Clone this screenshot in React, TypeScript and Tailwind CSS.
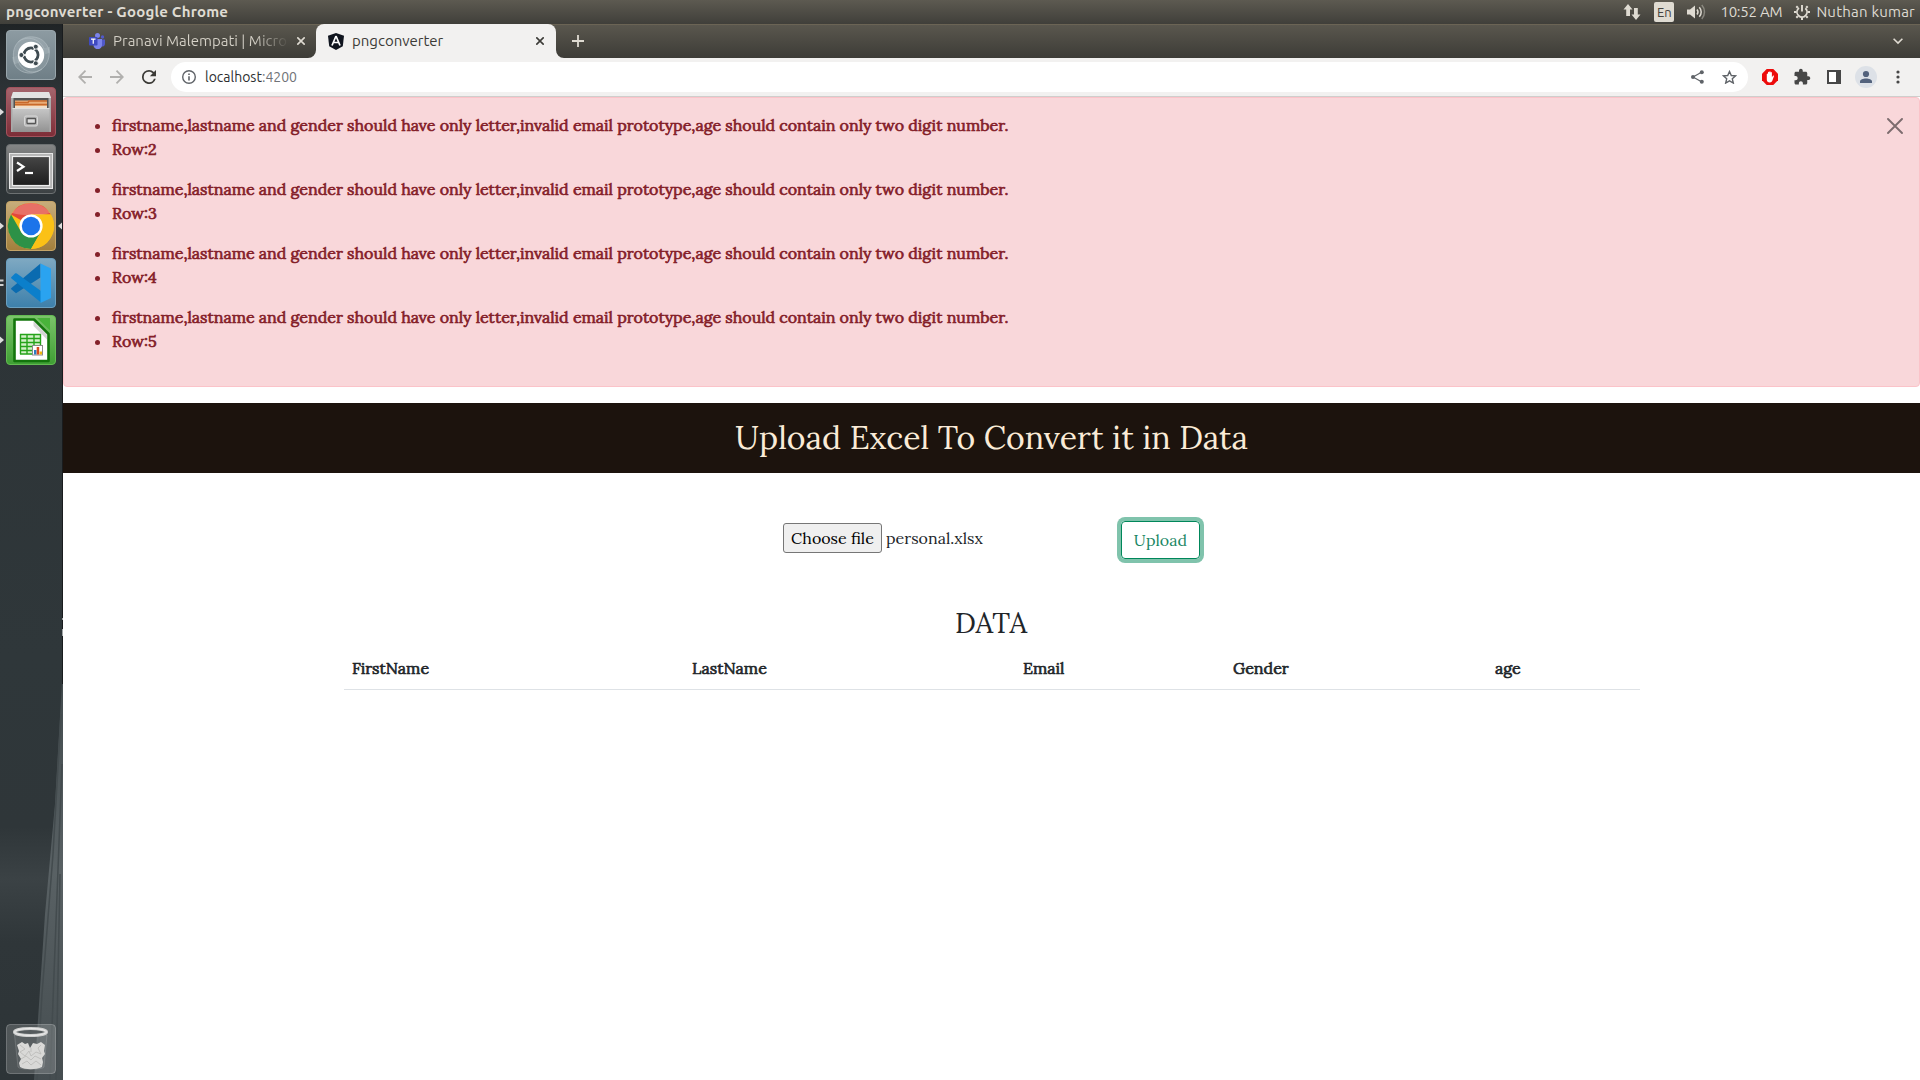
import React from "react";

const MESSAGE =
  "firstname,lastname and gender should have only letter,invalid email prototype,age should contain only two digit number.";
const ROWS = [2, 3, 4, 5];

/* ---------- launcher icons ---------- */

function Tile({ from, to, stroke }: { from: string; to: string; stroke: string }) {
  const id = "t" + from.slice(1) + to.slice(1);
  return (
    <>
      <defs>
        <linearGradient id={id} x1="0" y1="0" x2="0" y2="1">
          <stop offset="0" stopColor={from} />
          <stop offset="1" stopColor={to} />
        </linearGradient>
      </defs>
      <rect x="0.5" y="0.5" width="49" height="49" rx="3.5" fill={`url(#${id})`} stroke={stroke} />
    </>
  );
}

function DashIcon() {
  return (
    <svg width="50" height="50" viewBox="0 0 50 50">
      <Tile from="#8d9ba2" to="#6f7f87" stroke="#98a5ab" />
      <g fill="none" stroke="#b4c0c5" strokeOpacity="0.6">
        <path d="M9 34C3 17 14 5 28 7c9 1 15 8 15 16" fill="#b4c0c5" fillOpacity="0.35" />
        <path d="M43 17c2 15-5 24-17 26C15 44 7 37 7 27" fill="#b4c0c5" fillOpacity="0.25" />
        <path d="M12 12C22 4 35 10 38 19M36 39C26 46 14 40 12 30" />
      </g>
      <circle cx="25" cy="25" r="13.2" fill="#fff" />
      <circle cx="25" cy="25" r="7" fill="none" stroke="#3f4b51" strokeWidth="2.9" />
      <g stroke="#fff" strokeWidth="1.3">
        <path d="M25 25H12M25 25l6.5-11.3M25 25l6.5 11.3" />
      </g>
      <circle cx="25" cy="25" r="5.4" fill="#fff" />
      <g fill="#3f4b51" stroke="#fff" strokeWidth="0.9">
        <circle cx="15.4" cy="25" r="2.5" />
        <circle cx="29.8" cy="16.7" r="2.5" />
        <circle cx="29.8" cy="33.3" r="2.5" />
      </g>
    </svg>
  );
}

function FilesIcon() {
  return (
    <svg width="50" height="50" viewBox="0 0 50 50">
      <Tile from="#a5656d" to="#7d2d37" stroke="#a3525c" />
      <defs>
        <linearGradient id="cab" x1="0" y1="0" x2="0" y2="1">
          <stop offset="0" stopColor="#c6c6c6" />
          <stop offset="1" stopColor="#929292" />
        </linearGradient>
      </defs>
      <path d="M7 5h36l2 6v34H5V11z" fill="#aaa" />
      <path d="M7 5h36l2 6H5z" fill="#e3e3e3" />
      <path d="M7.500 11h35v11h-35z" fill="#535353" />
      <path d="M9 13.500h32v8H9z" fill="#e8ad78" />
      <path d="M9 15.500h13l1-1.500h18M9 17.500h32" stroke="#c9692b" strokeWidth="1.500" fill="none" />
      <path d="M9 19h32v2H9z" fill="#f0ddc8" />
      <path d="M6.500 21.500h37V45h-37z" fill="url(#cab)" />
      <path d="M6.500 21.500h37" stroke="#e0e0e0" />
      <rect x="18.500" y="29" width="13" height="10" rx="1.500" fill="#b9b9b9" stroke="#d8d8d8" />
      <rect x="21" y="31.500" width="8.500" height="5" rx="0.500" fill="#ddd" stroke="#555" strokeWidth="1.300" />
    </svg>
  );
}

function TerminalIcon() {
  return (
    <svg width="50" height="50" viewBox="0 0 50 50">
      <Tile from="#858686" to="#3b4042" stroke="#6d7172" />
      <defs>
        <linearGradient id="scr" x1="0" y1="0" x2="0" y2="1">
          <stop offset="0" stopColor="#464646" />
          <stop offset="1" stopColor="#1d1d1d" />
        </linearGradient>
      </defs>
      <rect x="3.500" y="9.500" width="43" height="35" fill="#b5b5b5" stroke="#e6e6e6" />
      <rect x="6.500" y="12.500" width="37" height="29" fill="url(#scr)" stroke="#ededed" strokeWidth="1.200" />
      <path d="M11 18.500l6.500 4.200L11 27" fill="none" stroke="#fff" strokeWidth="2.200" />
      <path d="M19 29h8" stroke="#fff" strokeWidth="2.200" />
    </svg>
  );
}

function ChromeIcon() {
  return (
    <svg width="50" height="50" viewBox="0 0 50 50">
      <Tile from="#c8ad7b" to="#a27f3c" stroke="#c4a468" />
      <circle cx="25" cy="25" r="23" fill="#fbc116" />
      <path d="M25 25 5.080 13.500A23 23 0 0 1 44.920 13.500L25 13.500Z" fill="#e2483b" />
      <path d="M5.080 13.500A23 23 0 0 0 25 48L34.960 30.750 15.040 30.750Z" fill="#2d9147" />
      <path d="M25 13.500H44.920A23 23 0 0 1 25 48L34.960 30.750Z" fill="#fbc116" />
      <path d="M6 12a23 23 0 0 1 38 0c-9 3-28 3-38 0z" fill="#fff" fillOpacity="0.22" />
      <circle cx="25" cy="25" r="11.600" fill="#fff" />
      <circle cx="25" cy="25" r="9.200" fill="#1c74ea" />
    </svg>
  );
}

function CodeIcon() {
  return (
    <svg width="50" height="50" viewBox="0 0 50 50">
      <Tile from="#7fa9c2" to="#3d80ab" stroke="#6ba0c0" />
      <path d="M34.500 5.500v14L10 35.200 5.500 31.500a1 1 0 0 1 0-1.600z" fill="#0a6bb0" />
      <path d="M5.500 20.500a1 1 0 0 1 0-1.600L9 15.500a1.500 1.500 0 0 1 1.800 0L35 33v11.500z" fill="#0b7fcb" />
      <path d="M34.500 5.500 45 10.500v29.500l-10.500 5z" fill="#2aa3f0" />
    </svg>
  );
}

function CalcIcon() {
  return (
    <svg width="50" height="50" viewBox="0 0 50 50">
      <Tile from="#7cc46b" to="#3f9f34" stroke="#63bb52" />
      <path d="M8.500 4.500H28L42.500 19v27h-34z" fill="#fff" stroke="#13750c" strokeWidth="2.600" strokeLinejoin="round" />
      <path d="M31 3h13v12.500z" fill="#49b33a" />
      <path d="M27.500 6 41 19.500v5L27.500 11z" fill="#d5d5d5" />
      <path d="M14 19h21v20H14z" fill="#d3f0c9" />
      <path
        d="M14 19.500h21M14 23.500h21M14 27.500h21M14 31.500h21M14 35.500h21M14 39h21M14.500 19v20M21 19v20M28 19v20M34.500 19v20"
        stroke="#25a31a"
        strokeWidth="1.400"
      />
      <rect x="26.500" y="30.500" width="10" height="9.500" fill="#fff" stroke="#8a8a8a" />
      <path d="M28 35h2.500v4.500H28z" fill="#2d7cc2" />
      <path d="M30.700 32h2.500v7.500h-2.500z" fill="#d94a1d" />
      <path d="M33.500 36.500H36v3h-2.500z" fill="#f2b90c" />
    </svg>
  );
}

function TrashIcon() {
  return (
    <svg width="50" height="50" viewBox="0 0 50 50">
      <rect x="0.500" y="0.500" width="49" height="49" rx="3.500" fill="#fff" fillOpacity="0.17" stroke="#fff" strokeOpacity="0.25" />
      <path d="M8.500 11 12 43c1 3 25 3 26 0l3-32z" fill="#fff" fillOpacity="0.05" stroke="#fff" strokeOpacity="0.15" />
      <path
        d="M11 21l5-3 3 2 3-1 2 5 3-5 4 1 4-2 4 3-1 6 1 3-3 4 1 4-1 5c-6 3-17 3-22 0l-1-4 2-4-3-5 1-3z"
        fill="#d9d9d7"
      />
      <path
        d="M14 21l5 4-5 3 5 4 4-5 2 5 5-4 5 2-3-6 3-3M15 35l5-3 5 4 4-4 6 3M16 40l5-3 4 4 5-4 5 4M25 24v4"
        fill="none"
        stroke="#bcbcba"
        strokeWidth="0.900"
      />
      <ellipse cx="24.500" cy="8" rx="16" ry="3.500" fill="#555b5d" stroke="#cfd0cf" strokeWidth="3" />
      <ellipse cx="24.500" cy="8" rx="16" ry="3.500" fill="none" stroke="#f0f0f0" strokeWidth="0.800" />
    </svg>
  );
}

function Arrow({ side }: { side: "left" | "right" }) {
  return side === "left" ? (
    <svg className="absolute top-[21px] left-0" width="4" height="8" viewBox="0 0 4 8">
      <path d="M0 0.500v7L4 4z" fill="#dcdcdc" />
    </svg>
  ) : (
    <svg className="absolute top-[21px] right-px" width="4" height="8" viewBox="0 0 4 8">
      <path d="M4 0.500v7L0 4z" fill="#dcdcdc" />
    </svg>
  );
}

function LauncherItem({ children, marks }: { children: React.ReactNode; marks?: React.ReactNode }) {
  return (
    <div className="relative flex h-[50px] w-full pl-1.5">
      {marks}
      {children}
    </div>
  );
}

function Launcher() {
  return (
    <aside className="relative flex w-[63px] shrink-0 flex-col justify-between overflow-hidden bg-[#30373a] pt-1.5 pb-1.5">
      <svg className="absolute inset-0" width="63" height="1056" viewBox="0 0 63 1056">
        <defs>
          <linearGradient id="wall" x1="0" y1="0" x2="0" y2="1">
            <stop offset="0" stopColor="#202426" />
            <stop offset="0.060" stopColor="#2c3235" />
            <stop offset="0.600" stopColor="#2f373a" />
            <stop offset="0.760" stopColor="#2f3639" />
            <stop offset="0.810" stopColor="#3b4245" />
            <stop offset="0.870" stopColor="#2f3639" />
            <stop offset="1" stopColor="#2d3437" />
          </linearGradient>
          <linearGradient id="wedge" x1="0" y1="0" x2="0" y2="1">
            <stop offset="0" stopColor="#40494c" />
            <stop offset="0.500" stopColor="#596164" />
            <stop offset="1" stopColor="#454d50" />
          </linearGradient>
        </defs>
        <rect width="63" height="1056" fill="url(#wall)" />
        <path d="M63 640 55 780 45 890 34 1056H63z" fill="url(#wedge)" />
        <path d="M61 690 53 830 42 970 37 1056M62 740 50 1056M60 850 56 1056" stroke="#434b4e" strokeWidth="1.500" fill="none" />
        <path d="M62.500 0V660" stroke="#191c1e" />
        <path d="M62.500 594v2M62.500 605v7" stroke="#a0a5a6" />
      </svg>
      <nav className="relative flex flex-col gap-[7px]">
        <LauncherItem>
          <DashIcon />
        </LauncherItem>
        <LauncherItem marks={<Arrow side="left" />}>
          <FilesIcon />
        </LauncherItem>
        <LauncherItem>
          <TerminalIcon />
        </LauncherItem>
        <LauncherItem
          marks={
            <>
              <Arrow side="left" />
              <Arrow side="right" />
            </>
          }
        >
          <ChromeIcon />
        </LauncherItem>
        <LauncherItem
          marks={
            <svg className="absolute top-[21px] left-0" width="4" height="8" viewBox="0 0 4 8">
              <path d="M0 1.500h3.500M0 6h3.500" stroke="#cfcfcf" strokeWidth="2" />
            </svg>
          }
        >
          <CodeIcon />
        </LauncherItem>
        <LauncherItem marks={<Arrow side="left" />}>
          <CalcIcon />
        </LauncherItem>
      </nav>
      <LauncherItem>
        <TrashIcon />
      </LauncherItem>
    </aside>
  );
}

/* ---------- system bar ---------- */

function SystemBar() {
  return (
    <header className="flex h-6 shrink-0 items-center bg-linear-to-b from-[#5d5a51] to-[#403f3a] pr-[5px] pl-1.5 text-[15px] text-[#dfdbd2]">
      <span className="text-[15px] leading-6 font-bold tracking-[0.22px]">pngconverter - Google Chrome</span>
      <div className="ml-auto flex items-center">
        <svg className="mr-[13px]" width="18" height="16" viewBox="0 0 18 16" fill="#dfdbd2">
          <path d="M5 0 9.500 5.500H7V12H3.200V5.500H0.500zM13 16 8.500 10.500H11V4h3.800v6.500h2.700z" />
        </svg>
        <span className="mr-[13px] flex h-5 w-5 items-center justify-center rounded-xs bg-[#dfdbd2] text-[13px] leading-none text-[#45433e]">
          En
        </span>
        <svg className="mr-[13px]" width="20" height="16" viewBox="0 0 20 16" fill="none" stroke="#dfdbd2" strokeWidth="1.500">
          <path d="M0 5.500h3L8 1.500v13L3 10.500H0z" fill="#dfdbd2" stroke="none" />
          <path d="M10 5.500a4 4 0 0 1 0 5" />
          <path d="M12.300 3.200a7 7 0 0 1 0 9.600" />
          <path d="M14.800 1a10.500 10.500 0 0 1 0 14" strokeOpacity="0.400" />
        </svg>
        <span className="w-[61px] leading-6 tracking-[-0.25px] whitespace-nowrap">10:52 AM</span>
        <svg className="mr-1.5 ml-[13px]" width="16" height="16" viewBox="0 0 16 16" fill="none" stroke="#dfdbd2">
          <circle cx="8" cy="8" r="5" strokeWidth="1.800" strokeDasharray="24 7.400" transform="rotate(-48 8 8)" />
          <path d="M8 1v6.500" strokeWidth="1.900" />
          <path
            d="M0 8h2.500M13.500 8H16M8 13.500V16M2.300 2.300l1.500 1.500M13.700 2.300l-1.500 1.500M2.300 13.700l1.500-1.500M13.700 13.700l-1.500-1.500"
            strokeWidth="2"
          />
        </svg>
        <span className="leading-6 tracking-[0.22px] whitespace-nowrap">Nuthan kumar</span>
      </div>
    </header>
  );
}

/* ---------- browser chrome ---------- */

function Cross({ color }: { color: string }) {
  return (
    <svg width="8" height="8" viewBox="0 0 8 8" stroke={color} strokeWidth="1.600">
      <path d="M0.300 0.300l7.400 7.400M7.700 0.300.300 7.700" />
    </svg>
  );
}

function TabStrip() {
  return (
    <div className="flex h-[34px] items-stretch border-t border-[#6b6455] bg-linear-to-b from-[#5a574e] to-[#3d3c37]">
      <div className="flex w-[253px] items-center pb-px pl-[26px]">
        <svg width="16" height="16" viewBox="0 0 16 16">
          <circle cx="13.500" cy="4" r="1.700" fill="#5059c9" />
          <path d="M10.500 6.500H16v4.500a2.500 2.500 0 0 1-4 2z" fill="#5059c9" />
          <circle cx="8.500" cy="2.500" r="2.500" fill="#7b83eb" />
          <path d="M4.500 6h8.500v6a4.200 4.200 0 0 1-8.500 0z" fill="#7b83eb" />
          <rect y="4" width="8.500" height="8.500" rx="0.800" fill="#3f4ac0" />
          <path d="M2 6.200h4.500M4.250 6.200v4.600" stroke="#fff" strokeWidth="1.200" />
        </svg>
        <span className="ml-2 w-[176px] overflow-hidden bg-linear-to-r from-[#d6d2c8] from-80% to-transparent bg-clip-text text-[15px] leading-6 whitespace-nowrap text-transparent">
          Pranavi Malempati | Micro
        </span>
        <span className="ml-2">
          <Cross color="#dfdbd2" />
        </span>
      </div>
      <div className="relative -mt-px flex w-[240px] items-center rounded-t-lg bg-[#f2f1f0] pl-3 text-[#3c3b37]">
        <svg className="absolute bottom-0 -left-2" width="8" height="8" viewBox="0 0 8 8">
          <path d="M8 0v8H0A8 8 0 0 0 8 0z" fill="#f2f1f0" />
        </svg>
        <svg className="absolute -right-2 bottom-0" width="8" height="8" viewBox="0 0 8 8">
          <path d="M0 0v8h8A8 8 0 0 1 0 0z" fill="#f2f1f0" />
        </svg>
        <svg width="16" height="17" viewBox="0 0 16 17">
          <path d="M8 0l8 2.800-1.200 10.500L8 17l-6.800-3.700L0 2.800z" fill="#10151f" />
          <path d="M8 3 4 12.500M8 3l4 9.500M5.300 9.500h5.400" stroke="#fff" strokeWidth="1.700" fill="none" />
        </svg>
        <span className="ml-2 text-[15px] leading-6">pngconverter</span>
        <span className="mr-3 ml-auto">
          <Cross color="#3c3b37" />
        </span>
      </div>
      <svg className="mt-2.5 ml-4" width="12" height="12" viewBox="0 0 12 12" stroke="#dfdbd2" strokeWidth="1.800">
        <path d="M6 0v12M0 6h12" />
      </svg>
      <svg className="mt-[13px] mr-[17px] ml-auto" width="10" height="7" viewBox="0 0 10 7" fill="none" stroke="#dfdbd2" strokeWidth="1.600">
        <path d="M0.600 0.700 5 5.100 9.400 0.700" />
      </svg>
    </div>
  );
}

function Toolbar() {
  return (
    <div className="flex h-[39px] items-center border-b border-[#cfcecc] bg-[#f2f1f0] pl-[15px]">
      <svg width="14" height="14" viewBox="0 0 14 14" fill="none" stroke="#b1b0ae" strokeWidth="1.800">
        <path d="M14 7H1.500M7.500 0.700 1.200 7l6.300 6.300" />
      </svg>
      <svg className="ml-[18px]" width="14" height="14" viewBox="0 0 14 14" fill="none" stroke="#b1b0ae" strokeWidth="1.800">
        <path d="M0 7h12.500M6.500 0.700 12.800 7l-6.300 6.300" />
      </svg>
      <svg className="ml-[18px]" width="14" height="14" viewBox="4 4 16 16" fill="#3c3b37">
        <path d="M17.650 6.350A7.960 7.960 0 0 0 12 4a8 8 0 1 0 7.730 10h-2.080A6 6 0 1 1 12 6c1.660 0 3.140.69 4.220 1.780L13 11h7V4z" />
      </svg>
      <div className="ml-[15px] flex h-[30px] w-[1577px] items-center rounded-full bg-white pr-[11px] pl-[11px]">
        <svg width="14" height="14" viewBox="0 0 14 14" fill="none" stroke="#5f6368" strokeWidth="1.400">
          <circle cx="7" cy="7" r="6.300" />
          <path d="M7 6.200v4.300M7 3.400v1.500" strokeWidth="1.600" />
        </svg>
        <span className="ml-[9px] text-[14px] leading-6 text-[#2d2e30]">
          localhost<span className="text-[#707377]">:4200</span>
        </span>
        <svg className="ml-auto" width="13" height="14" viewBox="0 0 13 14" fill="#5f6368">
          <path d="M11 2 2 7l9 5" fill="none" stroke="#5f6368" strokeWidth="1.200" />
          <circle cx="10.800" cy="2.200" r="2" />
          <circle cx="2" cy="7" r="2" />
          <circle cx="10.800" cy="11.800" r="2" />
        </svg>
        <svg className="ml-[18px]" width="15" height="14" viewBox="0 0 15 14" fill="none" stroke="#5f6368" strokeWidth="1.400">
          <path d="M7.500 1.500l1.800 4 4.300.4-3.300 2.900 1 4.200-3.800-2.200L3.700 13l1-4.200L1.400 5.900l4.300-.4z" />
        </svg>
      </div>
      <svg className="ml-3.5" width="16" height="16" viewBox="0 0 16 16">
        <path d="M4.700 0h6.600L16 4.700v6.600L11.300 16H4.700L0 11.300V4.700z" fill="#ed0c0c" />
        <path
          d="M4.800 5.200c0-1 1.200-1 1.200 0V3.500c0-1 1.300-1 1.300 0V3c0-1 1.300-1 1.300 0v.7c0-1 1.300-1 1.300 0v4.500l.8-1.300c.6-.8 1.500-.3 1.200.5l-1.500 4c-.4 1.300-1.300 2-2.600 2-1.900 0-3-1.200-3-3z"
          fill="#fff"
        />
      </svg>
      <svg className="ml-[15px]" width="18" height="18" viewBox="0 0 24 24" fill="#474747">
        <path d="M20.500 11H19V7c0-1.100-.9-2-2-2h-4V3.500C13 2.120 11.880 1 10.500 1S8 2.120 8 3.500V5H4c-1.100 0-1.990.9-1.990 2v3.800H3.500c1.490 0 2.700 1.210 2.700 2.700s-1.210 2.700-2.700 2.700H2V20c0 1.100.9 2 2 2h3.800v-1.500c0-1.490 1.210-2.700 2.700-2.700 1.490 0 2.700 1.210 2.700 2.700V22H17c1.100 0 2-.9 2-2v-4h1.500c1.380 0 2.500-1.120 2.500-2.500S21.880 11 20.500 11z" />
      </svg>
      <svg className="ml-[16px]" width="14" height="14" viewBox="0 0 14 14">
        <path d="M1 1h12v12H1z" fill="#fff" stroke="#474747" strokeWidth="2" />
        <path d="M9 1h4v12H9z" fill="#474747" />
      </svg>
      <svg className="ml-3.5" width="22" height="22" viewBox="0 0 22 22">
        <circle cx="11" cy="11" r="11" fill="#dde1e7" />
        <circle cx="11" cy="8" r="3.100" fill="#53627c" />
        <path d="M5 17v-1.500c0-4 12-4 12 0V17z" fill="#53627c" />
      </svg>
      <svg className="ml-[19px]" width="4" height="14" viewBox="0 0 4 14" fill="#474747">
        <circle cx="2" cy="2" r="1.600" />
        <circle cx="2" cy="7" r="1.600" />
        <circle cx="2" cy="12" r="1.600" />
      </svg>
    </div>
  );
}

/* ---------- page ---------- */

function Alert() {
  return (
    <div className="relative rounded border border-[#fbc3c9] bg-[#f9d7da] px-4 pt-[15px] pb-[17px] text-[#842029] [-webkit-text-stroke:0.64px_#842029]">
      {ROWS.map((row) => (
        <ul key={row} className="mb-4 list-disc pl-8">
          <li>{MESSAGE}</li>
          <li>Row:{row}</li>
        </ul>
      ))}
      <svg className="absolute top-[20px] right-4" width="16" height="16" viewBox="0 0 16 16" stroke="#7d6c6e" strokeWidth="1.900" strokeLinecap="round">
        <path d="M1 1l14 14M15 1 1 15" />
      </svg>
    </div>
  );
}

function Page() {
  return (
    <main className="flex-1 bg-white font-['Lora','Liberation_Serif',serif] text-base leading-6 text-[#212529]">
      <Alert />
      <h1 className="mt-4 h-[70px] bg-[#1c130d] py-4 text-center text-[32px] leading-[38.4px] text-[#faebd7]">
        Upload Excel To Convert it in Data
      </h1>
      <div className="mt-12 flex pl-[720px]">
        <div className="mt-0.5 flex h-[30px] items-center">
          <button className="h-[30px] w-[99px] rounded-[3px] border border-[#767676] bg-[#efefef] text-center whitespace-nowrap text-black">
            Choose file
          </button>
          <span className="ml-1">personal.xlsx</span>
        </div>
        <button className="ml-[138px] h-[38px] w-[79px] rounded border border-[#00875a] text-[#198764] ring-4 ring-[#80c3ac]">
          Upload
        </button>
      </div>
      <section className="mt-12 mr-[280px] ml-[281px]">
        <h2 className="pr-0.5 text-center text-[28px] leading-[33.6px]">DATA</h2>
        <table className="mt-[7px] w-full table-fixed border-collapse text-left">
          <colgroup>
            <col className="w-[340px]" />
            <col className="w-[331px]" />
            <col className="w-[210px]" />
            <col className="w-[262px]" />
            <col />
          </colgroup>
          <thead>
            <tr className="border-b border-[#dee2e6]">
              {["FirstName", "LastName", "Email", "Gender", "age"].map((name) => (
                <th key={name} className="px-2 pt-2 pb-[9px] font-normal [-webkit-text-stroke:0.64px_#212529]">
                  {name}
                </th>
              ))}
            </tr>
          </thead>
        </table>
      </section>
    </main>
  );
}

export default function App() {
  return (
    <div className="flex h-[1080px] w-[1920px] flex-col overflow-hidden bg-white font-['Ubuntu','Noto_Sans',sans-serif]">
      <SystemBar />
      <div className="flex min-h-0 flex-1">
        <Launcher />
        <div className="flex min-w-0 flex-1 flex-col">
          <TabStrip />
          <Toolbar />
          <Page />
        </div>
      </div>
    </div>
  );
}
